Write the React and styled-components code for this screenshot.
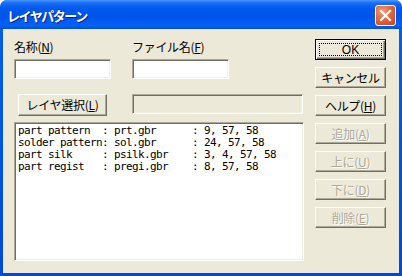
import styled, { createGlobalStyle } from "styled-components";

const GlobalStyle = createGlobalStyle`
  html, body {
    margin: 0;
    padding: 0;
    background: #ffffff;
  }
  body {
    font-family: "Noto Sans CJK JP", "Noto Sans", sans-serif;
  }
`;

const layers = [
  { name: "part pattern", file: "prt.gbr", nums: "9, 57, 58" },
  { name: "solder pattern", file: "sol.gbr", nums: "24, 57, 58" },
  { name: "part silk", file: "psilk.gbr", nums: "3, 4, 57, 58" },
  { name: "part regist", file: "pregi.gbr", nums: "8, 57, 58" },
];

const sideButtons = [
  { label: "キャンセル" },
  { label: "ヘルプ", key: "H" },
  { label: "追加", key: "A", disabled: true },
  { label: "上に", key: "U", disabled: true },
  { label: "下に", key: "D", disabled: true },
  { label: "削除", key: "E", disabled: true },
];

const formatRow = (row) =>
  row.name.padEnd(14, " ") + ": " + row.file.padEnd(13, " ") + ": " + row.nums;

const App = () => {
  return (
    <>
      <GlobalStyle />
      <Window>
        <TitleBar>
          <Title>レイヤパターン</Title>
          <CloseButton>
            <svg width="13" height="13" viewBox="0 0 13 13">
              <path
                d="M2 2 L11 11 M11 2 L2 11"
                stroke="#ffffff"
                strokeWidth="2.2"
                strokeLinecap="square"
              />
            </svg>
          </CloseButton>
        </TitleBar>
        <Body>
          <LeftColumn>
            <FieldsRow>
              <Field>
                <Label>
                  名称(<u>N</u>)
                </Label>
                <TextInput />
              </Field>
              <Field>
                <Label>
                  ファイル名(<u>F</u>)
                </Label>
                <TextInput />
              </Field>
            </FieldsRow>
            <SelectRow>
              <PushButton $width={89} $height={22}>
                レイヤ選択(<u>L</u>)
              </PushButton>
              <ReadOnlyField />
            </SelectRow>
            <ListBox>
              {layers.map((row) => (
                <ListLine key={row.name}>{formatRow(row)}</ListLine>
              ))}
            </ListBox>
          </LeftColumn>
          <RightColumn>
            <DefaultButton>
              <FocusRect>OK</FocusRect>
            </DefaultButton>
            {sideButtons.map((b) => (
              <PushButton key={b.label} $disabled={b.disabled}>
                {b.label}
                {b.key && (
                  <>
                    (<u>{b.key}</u>)
                  </>
                )}
              </PushButton>
            ))}
          </RightColumn>
        </Body>
      </Window>
    </>
  );
};

export default App;

const Window = styled.div`
  width: 402px;
  height: 276px;
  box-sizing: border-box;
  background: linear-gradient(
    180deg,
    #0a5fe6 0%,
    #0055e5 50%,
    #0049d6 100%
  );
  border-radius: 7px 7px 0 0;
  display: flex;
  flex-direction: column;
  overflow: hidden;
`;

const TitleBar = styled.div`
  height: 29px;
  flex: none;
  display: flex;
  align-items: center;
  justify-content: space-between;
  padding: 0 6px 0 7px;
  box-sizing: border-box;
  border-radius: 7px 7px 0 0;
  background: linear-gradient(
    180deg,
    #4a98fa 0%,
    #1a6ef6 10%,
    #0058ee 30%,
    #0055e8 60%,
    #0062f8 88%,
    #004fd8 100%
  );
`;

const Title = styled.span`
  color: #ffffff;
  font-family: "Noto Sans CJK JP", sans-serif;
  font-weight: 700;
  font-size: 13px;
  letter-spacing: -1.4px;
  text-shadow: 1px 1px 0 #0a1e8c;
  margin-top: 1px;
`;

const CloseButton = styled.div`
  width: 21px;
  height: 21px;
  box-sizing: border-box;
  border: 1px solid #ffffff;
  border-radius: 3px;
  background: radial-gradient(
    circle at 35% 30%,
    #f0a080 0%,
    #e1663d 45%,
    #c8401c 100%
  );
  display: flex;
  align-items: center;
  justify-content: center;
  margin-top: 1px;
`;

const Body = styled.div`
  flex: 1;
  margin: 0 3px 3px 3px;
  background: #ece9d8;
  display: flex;
  padding: 10px 0 0 11px;
  box-sizing: border-box;
`;

const LeftColumn = styled.div`
  width: 290px;
  display: flex;
  flex-direction: column;
`;

const FieldsRow = styled.div`
  display: flex;
  gap: 21px;
`;

const Field = styled.div`
  display: flex;
  flex-direction: column;
`;

const Label = styled.div`
  font-size: 12px;
  line-height: 14px;
  height: 14px;
  margin-top: 1px;
  color: #000000;
  letter-spacing: -0.3px;
  u {
    text-decoration-thickness: 1px;
  }
`;

const sunken = `
  box-sizing: border-box;
  border-style: solid;
  border-width: 1px;
  border-color: #aca899 #ffffff #ffffff #aca899;
  box-shadow: inset 1px 1px 0 #716f64, inset -1px -1px 0 #f1efe2;
`;

const TextInput = styled.div`
  ${sunken}
  width: 97px;
  height: 20px;
  margin-top: 5px;
  background: #ffffff;
`;

const SelectRow = styled.div`
  display: flex;
  align-items: flex-start;
  margin-top: 15px;
  padding-left: 4px;
  gap: 25px;
`;

const ReadOnlyField = styled.div`
  ${sunken}
  width: 171px;
  height: 20px;
  background: #ece9d8;
`;

const ListBox = styled.div`
  ${sunken}
  margin-top: 6px;
  height: 139px;
  width: 290px;
  background: #ffffff;
  padding: 2px 0 0 3px;
`;

const ListLine = styled.div`
  font-family: "DejaVu Sans Mono", "Liberation Mono", monospace;
  font-size: 11px;
  letter-spacing: -0.62px;
  line-height: 12px;
  height: 12px;
  white-space: pre;
  color: #000000;
`;

const RightColumn = styled.div`
  display: flex;
  flex-direction: column;
  gap: 7px;
  margin-left: 11px;
`;

const PushButton = styled.div`
  width: ${(p) => p.$width || 71}px;
  height: ${(p) => p.$height || 21}px;
  box-sizing: border-box;
  display: flex;
  align-items: center;
  justify-content: center;
  background: #ece9d8;
  border-style: solid;
  border-width: 1px;
  border-color: #ffffff #716f64 #716f64 #ffffff;
  box-shadow: inset -1px -1px 0 #aca899;
  font-size: 12px;
  letter-spacing: -0.3px;
  color: ${(p) => (p.$disabled ? "#aca899" : "#000000")};
  text-shadow: ${(p) => (p.$disabled ? "1px 1px 0 #ffffff" : "none")};
  padding-bottom: 1px;
`;

const DefaultButton = styled.div`
  width: 71px;
  height: 21px;
  box-sizing: border-box;
  background: #ece9d8;
  border: 1px solid #000000;
  box-shadow: inset 1px 1px 0 #ffffff, inset -1px -1px 0 #716f64,
    inset -2px -2px 0 #aca899;
  padding: 3px;
  display: flex;
`;

const FocusRect = styled.div`
  flex: 1;
  border: 1px dotted #000000;
  display: flex;
  align-items: center;
  justify-content: center;
  font-family: "Liberation Sans", sans-serif;
  font-size: 12px;
  color: #000000;
`;
